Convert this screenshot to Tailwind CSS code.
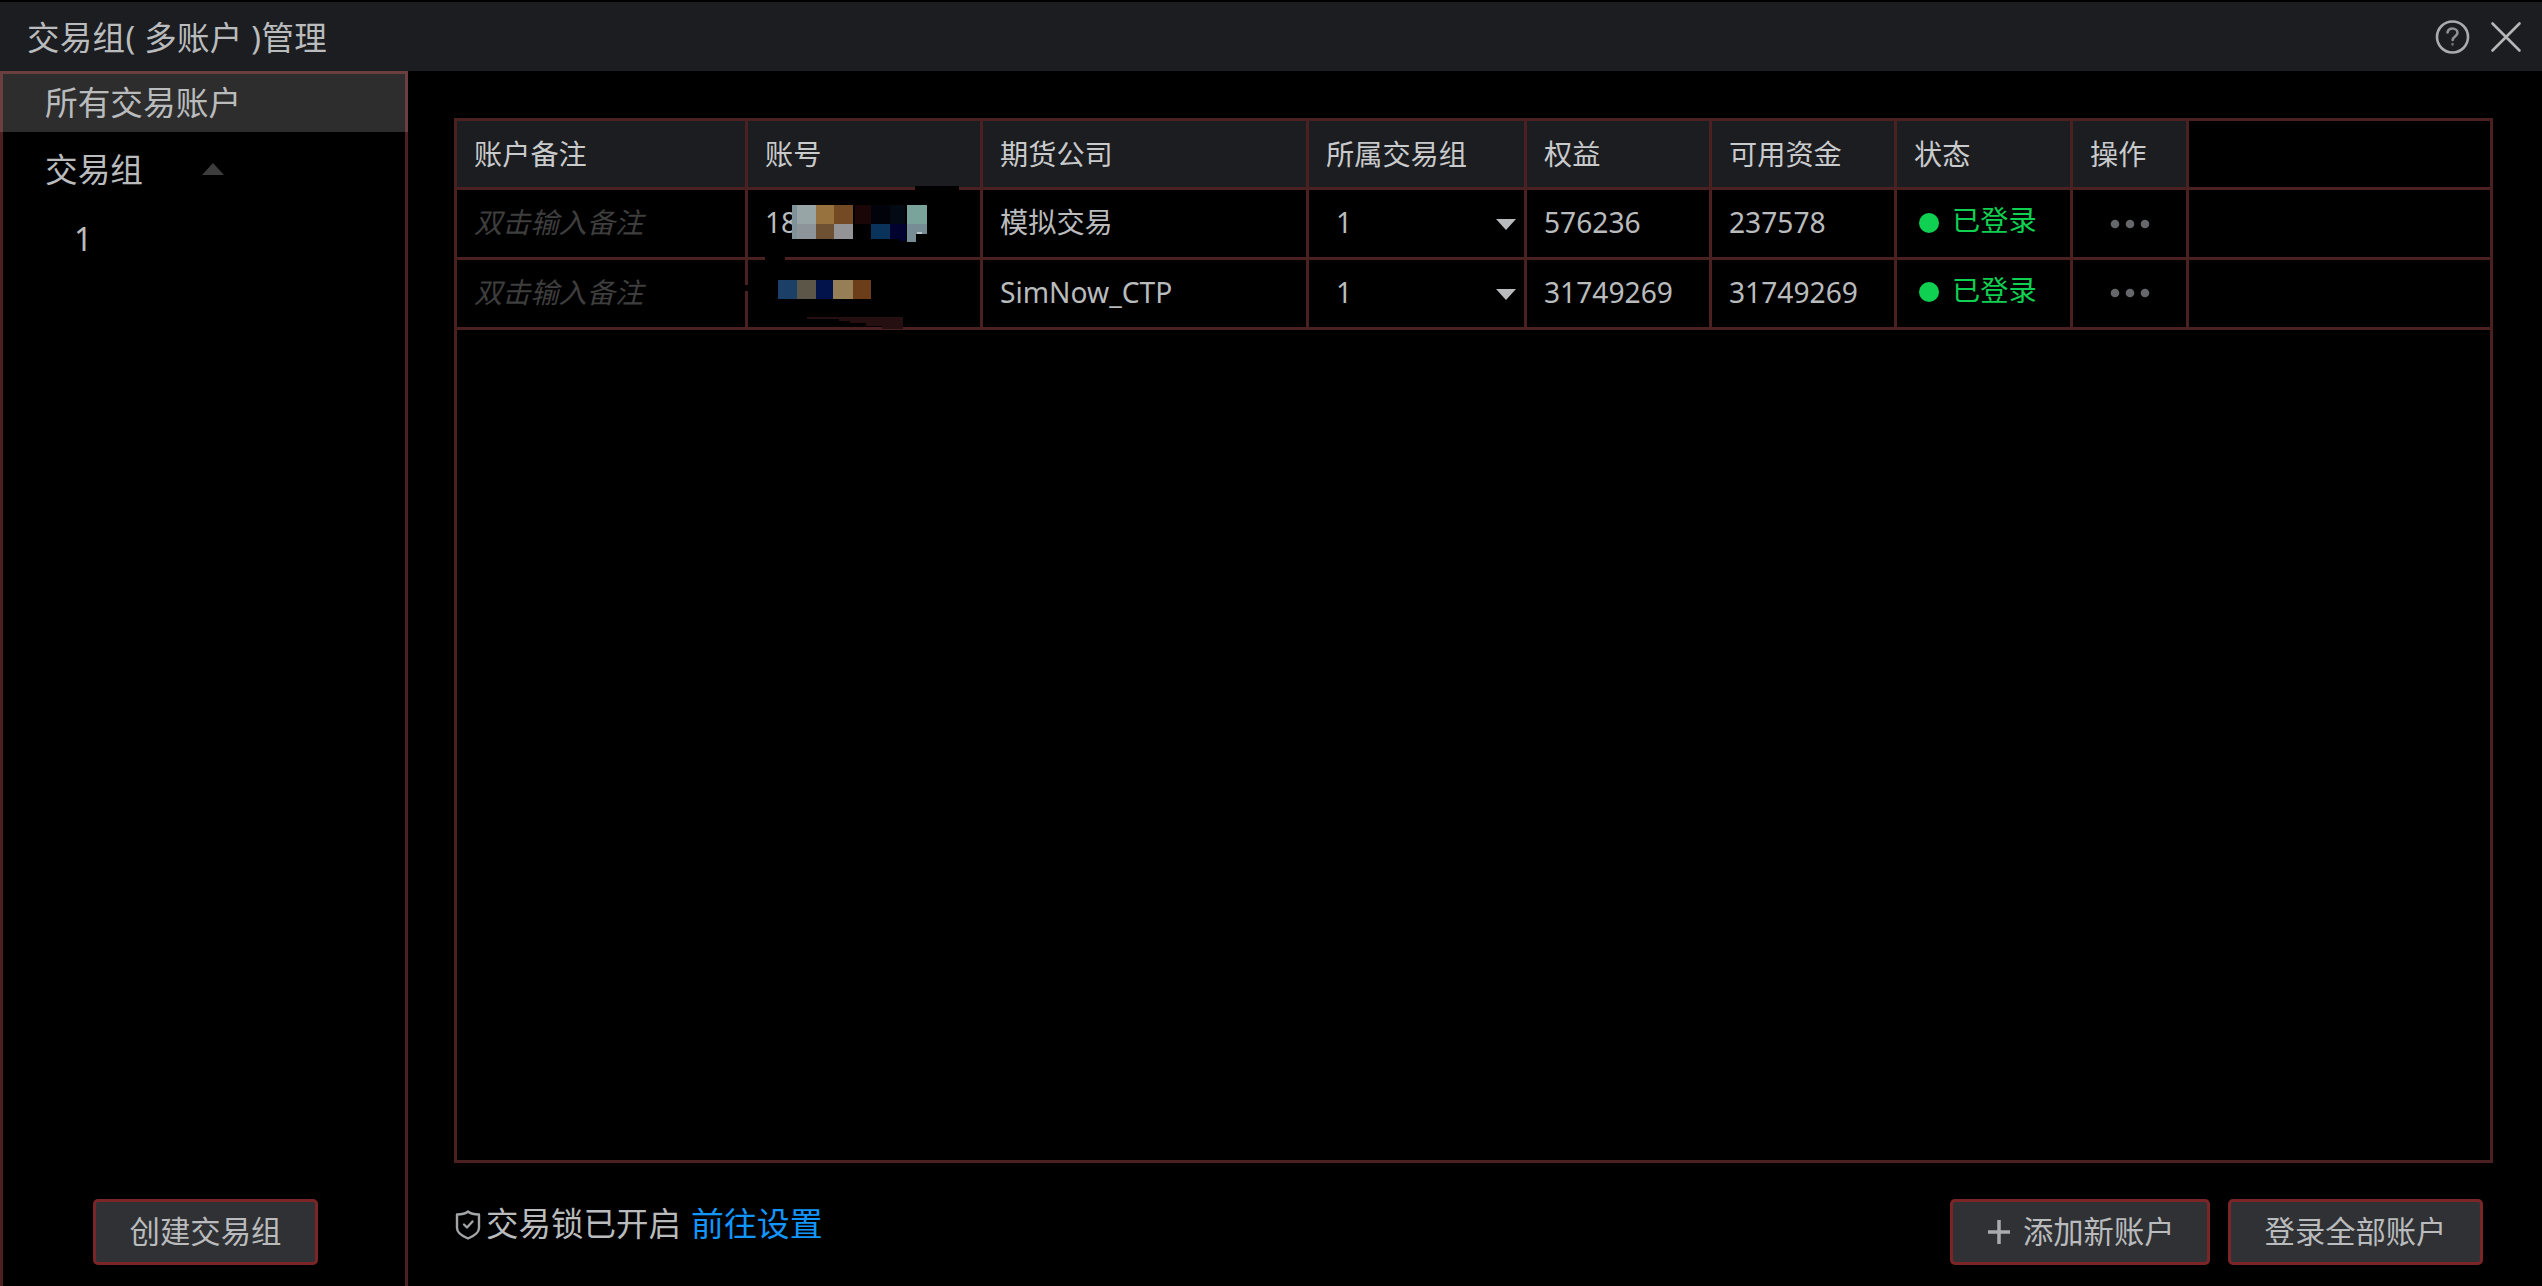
<!DOCTYPE html>
<html lang="zh-CN">
<head>
  <meta charset="UTF-8" />
  <meta name="viewport" content="width=device-width, initial-scale=1" />
  <title>交易组( 多账户 )管理</title>
  <script src="https://cdn.jsdelivr.net/npm/@tailwindcss/browser@4"></script>
</head>
<body class="bg-black text-[#b9bbbd] font-['Noto_Sans','Noto_Sans_CJK_SC',sans-serif] h-screen overflow-hidden flex flex-col">
  <!-- Title bar -->
  <header class="mt-[2px] h-[69px] shrink-0 bg-[#1c1d20] flex items-center justify-between pl-[27px] pr-[20px]">
    <h1 class="pt-[3px] text-[32.500px] tracking-[0.3px] leading-none whitespace-pre">交易组( 多账户 )管理</h1>
    <div class="flex items-center gap-[20px] pt-[1px]">
      <svg class="w-[36px] h-[36px]" viewBox="0 0 36 36" fill="none" stroke="#a9abad" stroke-width="2.6" stroke-linecap="round">
        <circle cx="18.500" cy="18" r="15.5" />
        <path d="M13.500 13.500c.5-2.500 2.500-4 5-4s5 1.800 5 4.300c0 3.700-4.800 3.700-4.800 7.200" stroke="#8f9193" />
        <path d="M18.500 25v.5" stroke="#6b6d6f" />
      </svg>
      <svg class="w-[32px] h-[32px]" viewBox="0 0 32 32" fill="none" stroke="#b4b6b8" stroke-width="2.6" stroke-linecap="round">
        <path d="M2.500 2.500l27 27M29.500 2.500l-27 27" />
      </svg>
    </div>
  </header>

  <div class="flex flex-1 min-h-0">
    <!-- Sidebar -->
    <aside class="w-[408px] shrink-0 border-x-[3px] border-[#4a2021] flex flex-col">
      <div class="-mx-[3px] h-[61px] shrink-0 bg-[#2d2d2d] border-[3px] border-b-0 border-[#6b3e3f] flex items-center pl-[42px] text-[32.700px] leading-none">所有交易账户</div>
      <div class="h-[78px] shrink-0 flex items-center pl-[42px]">
        <span class="-mt-[2px] text-[32.700px] leading-none">交易组</span>
        <svg class="ml-[59px] mt-[-5px] w-[22px] h-[12px]" viewBox="0 0 22 12" fill="#3d3d3d"><path d="M11 0l11 12H0z" /></svg>
      </div>
      <div class="h-[58px] shrink-0 flex items-center pl-[71px] text-[32px] leading-none">1</div>
      <button class="mt-auto mb-[21px] ml-[90px] w-[225px] h-[66px] rounded-[5px] border-[3px] border-[#7c2527] bg-[#303134] text-[30.400px] leading-none">创建交易组</button>
    </aside>

    <!-- Main -->
    <main class="flex-1 pt-[47px] pl-[46px] pr-[49px] flex flex-col">
      <div class="relative h-[1045px] border-[3px] border-[#4a2021] text-[28.200px] leading-none">
        <!-- Table header -->
        <div class="grid grid-cols-[291px_235px_326px_218px_185px_185px_176px_116px_1fr] h-[69px] border-b-[3px] border-[#4a2021] *:flex *:items-center *:pl-[17px] *:border-[#4a2021] text-[#c8cacc]">
          <div class="border-r-[3px] bg-[#1c1d20]">账户备注</div>
          <div class="border-r-[3px] bg-[#1c1d20]">账号</div>
          <div class="border-r-[3px] bg-[#1c1d20]">期货公司</div>
          <div class="border-r-[3px] bg-[#1c1d20]">所属交易组</div>
          <div class="border-r-[3px] bg-[#1c1d20]">权益</div>
          <div class="border-r-[3px] bg-[#1c1d20]">可用资金</div>
          <div class="border-r-[3px] bg-[#1c1d20]">状态</div>
          <div class="border-r-[3px] bg-[#1c1d20]">操作</div>
          <div></div>
        </div>
        <!-- Row 1 -->
        <div class="grid grid-cols-[291px_235px_326px_218px_185px_185px_176px_116px_1fr] h-[70px] border-b-[3px] border-[#4a2021] *:flex *:items-center *:pl-[17px] *:pb-[2px] *:border-[#4a2021]">
          <div class="border-r-[3px] italic text-[#3e3e3e]">双击输入备注</div>
          <div class="border-r-[3px]">18</div>
          <div class="border-r-[3px]">模拟交易</div>
          <div class="border-r-[3px] justify-between pr-[8px]">
            <span class="ml-[10px]">1</span>
            <svg class="mt-[4px] w-[20px] h-[11px]" viewBox="0 0 20 11" fill="#b9bbbd"><path d="M0 0h20L10 11z" /></svg>
          </div>
          <div class="border-r-[3px]">576236</div>
          <div class="border-r-[3px]">237578</div>
          <div class="border-r-[3px] text-[#10d052]"><i class="ml-[5px] mr-[13px] size-[20px] rounded-full bg-[#10d052]"></i><span class="-mt-[4px]">已登录</span></div>
          <div class="border-r-[3px]">
            <svg class="mt-[2px] ml-[20px] w-[40px] h-[10px]" viewBox="0 0 40 10" fill="#66676a"><circle cx="5" cy="5" r="4.300" /><circle cx="20" cy="5" r="4.300" /><circle cx="35" cy="5" r="4.300" /></svg>
          </div>
          <div></div>
        </div>
        <!-- Row 2 -->
        <div class="grid grid-cols-[291px_235px_326px_218px_185px_185px_176px_116px_1fr] h-[70px] border-b-[3px] border-[#4a2021] *:flex *:items-center *:pl-[17px] *:pb-[3px] *:border-[#4a2021]">
          <div class="border-r-[3px] italic text-[#3e3e3e]">双击输入备注</div>
          <div class="border-r-[3px]"></div>
          <div class="border-r-[3px]">SimNow_CTP</div>
          <div class="border-r-[3px] justify-between pr-[8px]">
            <span class="ml-[10px]">1</span>
            <svg class="mt-[4px] w-[20px] h-[11px]" viewBox="0 0 20 11" fill="#b9bbbd"><path d="M0 0h20L10 11z" /></svg>
          </div>
          <div class="border-r-[3px]">31749269</div>
          <div class="border-r-[3px]">31749269</div>
          <div class="border-r-[3px] text-[#10d052]"><i class="ml-[5px] mr-[13px] size-[20px] rounded-full bg-[#10d052]"></i><span class="-mt-[4px]">已登录</span></div>
          <div class="border-r-[3px]">
            <svg class="mt-[2px] ml-[20px] w-[40px] h-[10px]" viewBox="0 0 40 10" fill="#66676a"><circle cx="5" cy="5" r="4.300" /><circle cx="20" cy="5" r="4.300" /><circle cx="35" cy="5" r="4.300" /></svg>
          </div>
          <div></div>
        </div>
        <!-- Mosaic over the account numbers -->
        <svg class="absolute left-[273px] top-[49px] w-[260px] h-[170px]" viewBox="0 0 780 510" shape-rendering="crispEdges">
          <path fill="#000" d="M555 49h131v16H555zM104 256h60v16h-60zM44 346h14v18H44z" />
          <path fill="#000" d="M480 163h110v56H480z" />
          <path fill="#7f929a" d="M185 106h15v101h-15z" />
          <path fill="#97a5a6" d="M200 106h57v57h-57z" />
          <path fill="#8d949a" d="M200 163h57v44h-57z" />
          <path fill="#97723f" d="M257 106h54v57h-54z" />
          <path fill="#6e5132" d="M257 163h54v44h-54z" />
          <path fill="#744a25" d="M311 106h57v57h-57z" />
          <path fill="#949497" d="M311 163h57v44h-57z" />
          <path fill="#1a0607" d="M374 106h48v57h-48z" />
          <path fill="#02020a" d="M422 106h58v57h-58z" />
          <path fill="#030a14" d="M480 106h45v57h-45z" />
          <path fill="#09335a" d="M422 163h58v44h-58z" />
          <path fill="#02022e" d="M480 163h49v50h-22v-6h-27z" />
          <path fill="#79a39b" d="M532 106h58v57h-58z" />
          <path fill="#768d95" d="M532 163h58v30h-33v22h-25z" />
          <path fill="#b9c4c8" d="M562 186h15v6h-15z" />
          <path fill="#1a4068" d="M144 330h56v58h-56z" />
          <path fill="#5b5648" d="M200 330h57v58h-57z" />
          <path fill="#02124a" d="M257 330h53v58h-53z" />
          <path fill="#967f57" d="M310 330h58v58h-58z" />
          <path fill="#6b3d18" d="M368 330h56v58h-56z" />
          <path fill="#260f10" d="M231 442h289v36h-63v-10h-49v-8h-48v-6h-33v-6h-96z" />
        </svg>
      </div>

      <!-- Footer -->
      <div class="flex items-start mt-[36px]">
        <svg class="mt-[11px] ml-[1px] w-[26px] h-[30px]" viewBox="0 0 26 30" fill="none" stroke="#a3a5a7" stroke-width="2.4" stroke-linejoin="round" stroke-linecap="round">
          <path d="M13 1.500C10 4 6 4.500 2 4.500V18c0 5 5 8 11 10.500C19 26 24 23 24 18V4.500c-4 0-8-.5-11-3z" />
          <path d="M9 14.500l3 3 5.500-6" />
        </svg>
        <p class="mt-[7px] ml-[5px] text-[32.500px] leading-[36px]">交易锁已开启</p>
        <a href="#" class="mt-[7px] ml-[10px] text-[32.900px] leading-[36px] text-[#1296fb]">前往设置</a>
        <button class="ml-auto w-[260px] h-[66px] rounded-[5px] border-[3px] border-[#7c2527] bg-[#303134] text-[30.300px] leading-none flex items-center pl-[34px]">
          <svg class="w-[24px] h-[24px] mr-[12px]" viewBox="0 0 24 24" stroke="#a9abad" stroke-width="3.500"><path d="M12 0v24M1 12h22" /></svg>添加新账户
        </button>
        <button class="ml-[18px] mr-[10px] w-[255px] h-[66px] rounded-[5px] border-[3px] border-[#7c2527] bg-[#303134] text-[30.300px] leading-none">登录全部账户</button>
      </div>
    </main>
  </div>
</body>
</html>
